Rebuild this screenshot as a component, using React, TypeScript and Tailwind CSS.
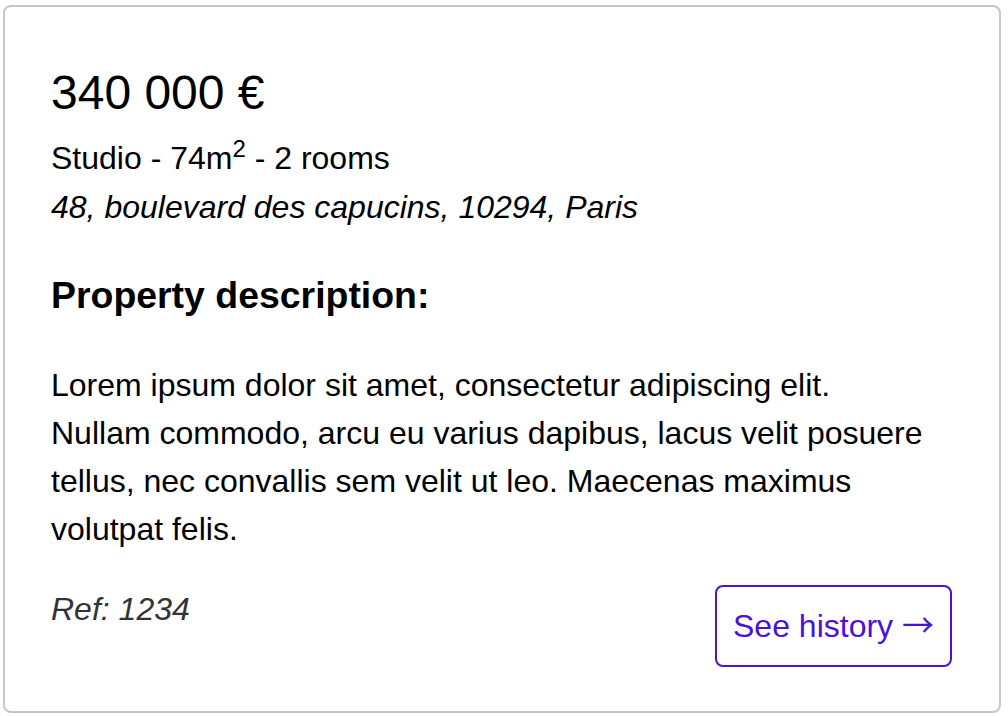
export default function App() {
  return (
    <div className="min-h-screen bg-white pl-[3px] pt-[5px] font-['Liberation_Sans',Arial,sans-serif] text-black">
      <div className="w-[998px] rounded-lg border-2 border-[#c6c6c6] pl-[46px] pr-[47px] pt-[58px] pb-[44px]">
        {/* Price */}
        <h2 className="text-[48px] leading-[56px] font-normal">340 000 €</h2>

        {/* Summary */}
        <p className="mt-[13px] text-[32px] leading-[48px]">
          Studio - 74m<sup className="text-[24px]">2</sup> - 2 rooms
        </p>
        <p className="mt-px text-[32px] leading-[48px] italic">
          48, boulevard des capucins, 10294, Paris
        </p>

        {/* Description */}
        <h3 className="mt-[36px] text-[37.44px] leading-[56px] font-bold">Property description:</h3>
        <p className="mt-[38px] text-[32px] leading-[48px]">
          Lorem ipsum dolor sit amet, consectetur adipiscing elit.
          <br />
          Nullam commodo, arcu eu varius dapibus, lacus velit posuere
          <br />
          tellus, nec convallis sem velit ut leo. Maecenas maximus
          <br />
          volutpat felis.
        </p>

        {/* Footer */}
        <div className="mt-[32px] flex items-start justify-between">
          <span className="text-[32px] leading-[48px] italic text-[#333333]">Ref: 1234</span>
          <button className="rounded-lg border-2 border-[#4a12d8] px-4 py-[19px] text-[32px] leading-[40px] text-[#4a12d8]">
            See history{' '}
            <span className="font-['Noto_Sans_CJK_JP',sans-serif] leading-none">→</span>
          </button>
        </div>
      </div>
    </div>
  );
}
